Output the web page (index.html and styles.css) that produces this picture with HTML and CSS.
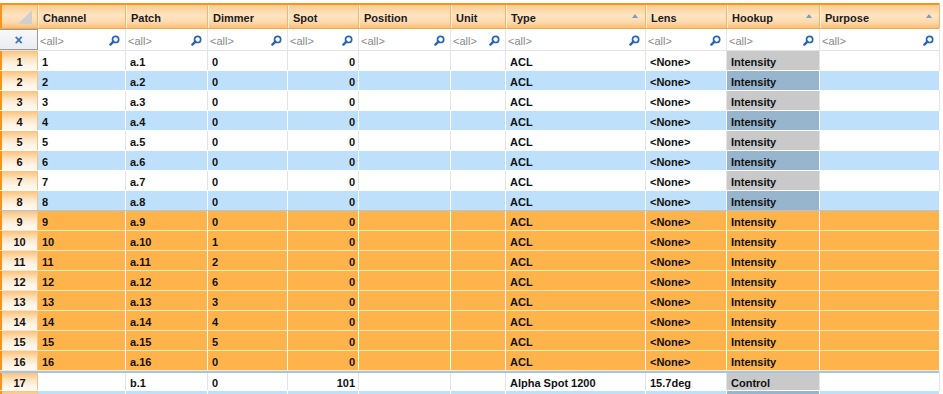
FILE: index.html
```html
<!DOCTYPE html>
<html lang="en">
  <head>
    <meta charset="UTF-8" />
    <title>Channel Hookup</title>
    <link rel="stylesheet" href="styles.css">
  </head>
  <body>
    <section class="sheet">
      <!-- column headers -->
      <div class="row head">
        <div class="corner"><span class="tri"></span></div>
        <div>Channel</div>
        <div>Patch</div>
        <div>Dimmer</div>
        <div>Spot</div>
        <div>Position</div>
        <div>Unit</div>
        <div>Type<i class="sort"></i></div>
        <div>Lens</div>
        <div>Hookup<i class="sort"></i></div>
        <div>Purpose<i class="sort"></i></div>
      </div>

      <!-- filter row -->
      <div class="row filter">
        <div class="clear">&times;</div>
        <div>&lt;all&gt;<svg class="find" viewBox="0 0 11 11"><circle cx="6.6" cy="4.4" r="3.1"/><path d="M4.4 6.6 1.4 9.6"/></svg></div>
        <div>&lt;all&gt;<svg class="find" viewBox="0 0 11 11"><circle cx="6.6" cy="4.4" r="3.1"/><path d="M4.4 6.6 1.4 9.6"/></svg></div>
        <div>&lt;all&gt;<svg class="find" viewBox="0 0 11 11"><circle cx="6.6" cy="4.4" r="3.1"/><path d="M4.4 6.6 1.4 9.6"/></svg></div>
        <div>&lt;all&gt;<svg class="find" viewBox="0 0 11 11"><circle cx="6.6" cy="4.4" r="3.1"/><path d="M4.4 6.6 1.4 9.6"/></svg></div>
        <div>&lt;all&gt;<svg class="find" viewBox="0 0 11 11"><circle cx="6.6" cy="4.4" r="3.1"/><path d="M4.4 6.6 1.4 9.6"/></svg></div>
        <div>&lt;all&gt;<svg class="find" viewBox="0 0 11 11"><circle cx="6.6" cy="4.4" r="3.1"/><path d="M4.4 6.6 1.4 9.6"/></svg></div>
        <div>&lt;all&gt;<svg class="find" viewBox="0 0 11 11"><circle cx="6.6" cy="4.4" r="3.1"/><path d="M4.4 6.6 1.4 9.6"/></svg></div>
        <div>&lt;all&gt;<svg class="find" viewBox="0 0 11 11"><circle cx="6.6" cy="4.4" r="3.1"/><path d="M4.4 6.6 1.4 9.6"/></svg></div>
        <div>&lt;all&gt;<svg class="find" viewBox="0 0 11 11"><circle cx="6.6" cy="4.4" r="3.1"/><path d="M4.4 6.6 1.4 9.6"/></svg></div>
        <div>&lt;all&gt;<svg class="find" viewBox="0 0 11 11"><circle cx="6.6" cy="4.4" r="3.1"/><path d="M4.4 6.6 1.4 9.6"/></svg></div>
      </div>

      <!-- data rows -->
      <div class="row r"><div class="n">1</div><div>1</div><div>a.1</div><div>0</div><div class="num">0</div><div></div><div></div><div>ACL</div><div>&lt;None&gt;</div><div class="hk">Intensity</div><div></div></div>
      <div class="row r alt"><div class="n">2</div><div>2</div><div>a.2</div><div>0</div><div class="num">0</div><div></div><div></div><div>ACL</div><div>&lt;None&gt;</div><div class="hk">Intensity</div><div></div></div>
      <div class="row r"><div class="n">3</div><div>3</div><div>a.3</div><div>0</div><div class="num">0</div><div></div><div></div><div>ACL</div><div>&lt;None&gt;</div><div class="hk">Intensity</div><div></div></div>
      <div class="row r alt"><div class="n">4</div><div>4</div><div>a.4</div><div>0</div><div class="num">0</div><div></div><div></div><div>ACL</div><div>&lt;None&gt;</div><div class="hk">Intensity</div><div></div></div>
      <div class="row r"><div class="n">5</div><div>5</div><div>a.5</div><div>0</div><div class="num">0</div><div></div><div></div><div>ACL</div><div>&lt;None&gt;</div><div class="hk">Intensity</div><div></div></div>
      <div class="row r alt"><div class="n">6</div><div>6</div><div>a.6</div><div>0</div><div class="num">0</div><div></div><div></div><div>ACL</div><div>&lt;None&gt;</div><div class="hk">Intensity</div><div></div></div>
      <div class="row r"><div class="n">7</div><div>7</div><div>a.7</div><div>0</div><div class="num">0</div><div></div><div></div><div>ACL</div><div>&lt;None&gt;</div><div class="hk">Intensity</div><div></div></div>
      <div class="row r alt last-alt"><div class="n">8</div><div>8</div><div>a.8</div><div>0</div><div class="num">0</div><div></div><div></div><div>ACL</div><div>&lt;None&gt;</div><div class="hk">Intensity</div><div></div></div>
      <div class="row r sel"><div class="n">9</div><div>9</div><div>a.9</div><div>0</div><div class="num">0</div><div></div><div></div><div>ACL</div><div>&lt;None&gt;</div><div class="hk">Intensity</div><div></div></div>
      <div class="row r sel"><div class="n">10</div><div>10</div><div>a.10</div><div>1</div><div class="num">0</div><div></div><div></div><div>ACL</div><div>&lt;None&gt;</div><div class="hk">Intensity</div><div></div></div>
      <div class="row r sel"><div class="n">11</div><div>11</div><div>a.11</div><div>2</div><div class="num">0</div><div></div><div></div><div>ACL</div><div>&lt;None&gt;</div><div class="hk">Intensity</div><div></div></div>
      <div class="row r sel"><div class="n">12</div><div>12</div><div>a.12</div><div>6</div><div class="num">0</div><div></div><div></div><div>ACL</div><div>&lt;None&gt;</div><div class="hk">Intensity</div><div></div></div>
      <div class="row r sel"><div class="n">13</div><div>13</div><div>a.13</div><div>3</div><div class="num">0</div><div></div><div></div><div>ACL</div><div>&lt;None&gt;</div><div class="hk">Intensity</div><div></div></div>
      <div class="row r sel"><div class="n">14</div><div>14</div><div>a.14</div><div>4</div><div class="num">0</div><div></div><div></div><div>ACL</div><div>&lt;None&gt;</div><div class="hk">Intensity</div><div></div></div>
      <div class="row r sel"><div class="n">15</div><div>15</div><div>a.15</div><div>5</div><div class="num">0</div><div></div><div></div><div>ACL</div><div>&lt;None&gt;</div><div class="hk">Intensity</div><div></div></div>
      <div class="row r sel"><div class="n">16</div><div>16</div><div>a.16</div><div>0</div><div class="num">0</div><div></div><div></div><div>ACL</div><div>&lt;None&gt;</div><div class="hk">Intensity</div><div></div></div>
      <div class="row r after-sel"><div class="n">17</div><div></div><div>b.1</div><div>0</div><div class="num">101</div><div></div><div></div><div>Alpha Spot 1200</div><div>15.7deg</div><div class="hk">Control</div><div></div></div>
      <div class="row r alt"><div class="n"></div><div></div><div></div><div></div><div></div><div></div><div></div><div></div><div></div><div class="hk"></div><div></div></div>
    </section>
  </body>
</html>
```

FILE: styles.css
```css
* {
  margin: 0;
  padding: 0;
  box-sizing: border-box;
}
html,
body {
  height: 394px;
  overflow: hidden;
}
body {
  background: #fff;
  font-family: "Liberation Sans", Arial, sans-serif;
  font-size: 11px;
  color: #111;
}
.sheet {
  width: 940px;
  margin-top: 3px;
  border-top: 2px solid #f7941e;
  border-right: 1px solid #e0e0e0;
}
.row {
  display: grid;
  grid-template-columns: 38px 88px 82px 80px 71px 92px 55px 140px 81px 93px 120px;
}

/* header */
.head {
  height: 24px;
  background: linear-gradient(#fccb8e, #fde4c3 45%, #fdd9ac 75%, #fbbd72);
  border-bottom: 1px solid #f2a955;
}
.head > div {
  display: flex;
  align-items: center;
  padding: 2px 0 0 5px;
  font-weight: bold;
  color: #1c1c1c;
  border-right: 1px solid #f6b66a;
  box-shadow: inset 1px 0 #fff0dc;
}
.head .corner {
  border-left: 2px solid #f7941e;
  justify-content: flex-end;
  align-items: flex-end;
  padding: 0 5px 4px 0;
  box-shadow: none;
}
.tri {
  width: 0;
  height: 0;
  border-left: 14px solid transparent;
  border-bottom: 14px solid #cfcfcf;
}
.sort {
  margin-left: auto;
  margin-right: 7px;
  margin-bottom: 3px;
  width: 0;
  height: 0;
  border-left: 3px solid transparent;
  border-right: 3px solid transparent;
  border-bottom: 4px solid #7f9cbb;
}

/* filter */
.filter {
  height: 22px;
  border-bottom: 1px solid #e3e3e3;
}
.filter > div {
  display: flex;
  align-items: center;
  justify-content: space-between;
  padding: 2px 5px 0 2px;
  color: #8a8a8a;
  border-right: 1px solid #e6e6e6;
}
.filter .clear {
  justify-content: center;
  padding: 0;
  margin-left: -1px;
  color: #3b6fb0;
  font-size: 14px;
  font-weight: bold;
  background: linear-gradient(#f7f8fa, #e9ecf0);
  border: 1px solid #9a9a9a;
}
.find {
  width: 11px;
  height: 11px;
  fill: none;
  stroke: #2a64b2;
}
.find circle {
  stroke-width: 1.7;
}
.find path {
  stroke-width: 2.4;
  stroke-linecap: round;
}

/* data rows */
.r {
  height: 20px;
  background: #fff;
  border-bottom: 1px solid #fff;
}
.r > div {
  display: flex;
  align-items: center;
  padding: 2px 0 0 4px;
  font-weight: bold;
  white-space: nowrap;
  overflow: hidden;
  border-right: 1px solid #e4e4e4;
}
.r .n {
  justify-content: center;
  padding-left: 0;
  border-left: 2px solid #f7941e;
  border-right: 1px solid #f4c489;
  background: linear-gradient(#fbc27b, #fee3c0 40%, #fff5e8 75%, #fff9f1);
}
.r .num {
  justify-content: flex-end;
  padding: 2px 3px 0 0;
}
.r .hk {
  background: #c9c9c9;
}
.alt {
  background: #bfe0fb;
}
.alt > div {
  border-right-color: #fff;
}
.alt .hk {
  background: #97b5cc;
}
.last-alt {
  border-bottom-color: #a8c8e4;
}
.sel {
  background: #ffb34b;
  border-bottom-color: #ffe6c6;
}
.sel > div {
  border-right-color: #fff;
}
.sel .hk {
  background: transparent;
}
.after-sel {
  border-top: 2px solid #a3c5e6;
}
```
